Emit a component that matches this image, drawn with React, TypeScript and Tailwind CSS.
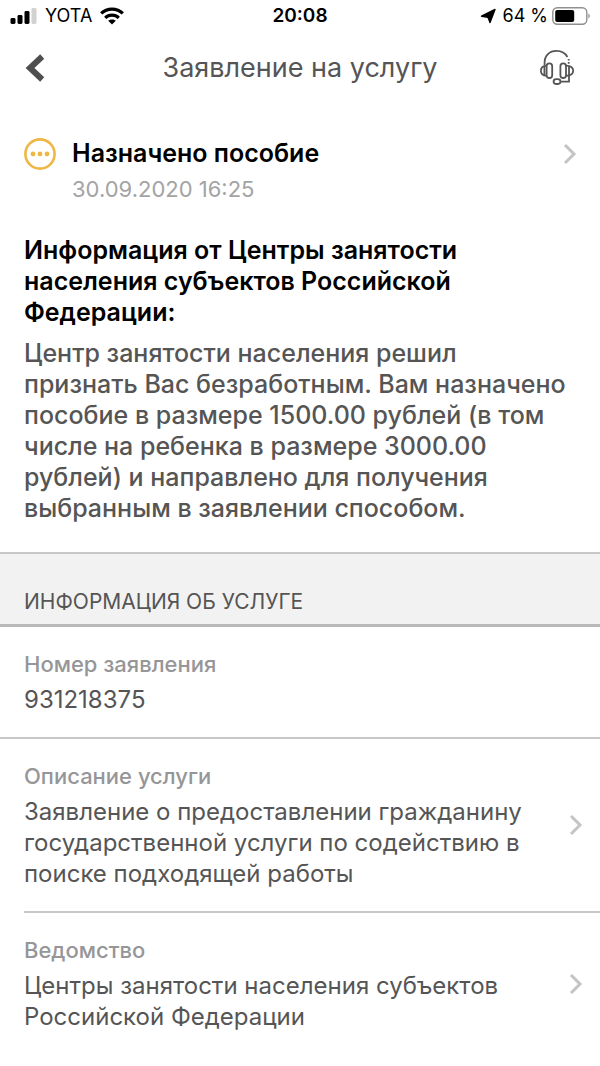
import clsx from "clsx"

type Row = {
    label: string
    value: string
    link?: boolean
    line?: "full" | "inset"
}

const rows: Row[] = [
    { label: "Номер заявления", value: "931218375", line: "full" },
    {
        label: "Описание услуги",
        value: "Заявление о предоставлении гражданину государственной услуги по содействию в поиске подходящей работы",
        link: true,
        line: "inset",
    },
    { label: "Ведомство", value: "Центры занятости населения субъектов Российской Федерации", link: true },
]

const Chevron = () => (
    <svg className="h-6 w-4 shrink-0" viewBox="0 0 16 24" fill="none" stroke="#c4c4c4" strokeWidth="3" aria-hidden="true">
        <path d="M3 3 L12 12 L3 21" />
    </svg>
)

const StatusBar = () => (
    <div className="grid h-8 grid-cols-[1fr_auto_1fr] items-center px-2.5 text-lg text-black">
        <div className="flex items-center gap-2">
            <svg className="h-4 w-[27px]" viewBox="0 0 27 16" aria-hidden="true">
                <rect x="0.5" y="10" width="5" height="6" rx="1.4" />
                <rect x="7.5" y="7" width="5" height="9" rx="1.4" />
                <rect x="14.5" y="3" width="5" height="13" rx="1.4" />
                <rect x="21.5" y="0" width="5" height="16" rx="1.4" fill="#d2d2d2" />
            </svg>
            <span>YOTA</span>
            <svg className="h-[18px] w-6" viewBox="0 0 24 18" fill="none" stroke="black" strokeWidth="3.2" aria-hidden="true">
                <path d="M1.2 6.4 C7 0.6 17 0.6 22.8 6.4" />
                <path d="M5.2 10.8 C9 7.2 15 7.2 18.8 10.8" />
                <path d="M12 17.5 L8.2 13.8 C10.4 12 13.6 12 15.8 13.8 Z" fill="black" stroke="none" />
            </svg>
        </div>
        <span className="text-[19px] font-semibold">20:08</span>
        <div className="flex items-center justify-end gap-1">
            <svg className="mr-0.5 h-4 w-4" viewBox="0 0 16 16" aria-hidden="true">
                <path d="M15 1.5 L10 14.5 L8 9.2 L1.5 8.2 Z" stroke="black" strokeWidth="1.4" strokeLinejoin="round" />
            </svg>
            <span>64 %</span>
            <svg className="h-[18px] w-[38px]" viewBox="0 0 38 18" aria-hidden="true">
                <rect x="0.8" y="0.8" width="34" height="16.4" rx="4.5" fill="none" stroke="#8f8f8f" strokeWidth="1.4" />
                <rect x="3.2" y="3" width="19" height="12" rx="2" />
                <path d="M36.4 6.5 C38.2 7.5 38.2 10.5 36.4 11.5 Z" fill="#8f8f8f" />
            </svg>
        </div>
    </div>
)

const Header = () => (
    <header className="grid h-[72px] grid-cols-[1fr_auto_1fr] items-center px-6 text-[#555555]">
        <button type="button" aria-label="Назад" className="justify-self-start">
            <svg className="h-7 w-5" viewBox="0 0 20 28" fill="none" stroke="#4f4f4f" strokeWidth="6" aria-hidden="true">
                <path d="M18.2 2.5 L6 14 L18.2 25.5" />
            </svg>
        </button>
        <h1 className="text-[27px] leading-8">Заявление на услугу</h1>
        <button type="button" aria-label="Поддержка" className="justify-self-end">
            <svg className="h-9 w-9" viewBox="0 0 36 36" fill="none" stroke="#555555" strokeWidth="1.8" aria-hidden="true">
                <path d="M4.6 15 V12.5 C4.6 5.4 9.6 0.9 16.4 0.9 C21.4 0.9 25.4 3.2 27.4 7" />
                <path d="M28.7 9 V10.6 M28.7 12 V13.8" />
                <rect x="6.6" y="13.4" width="5.6" height="14.6" rx="2.8" />
                <rect x="20.4" y="13.4" width="5.6" height="14.6" rx="2.8" />
                <path d="M6.6 15.6 C2.4 15.8 0.9 18 0.9 20.7 C0.9 23.4 2.4 25.6 6.6 25.8" />
                <path d="M4.4 16 V25.4" />
                <path d="M26 15.6 C31 15.8 33.2 18 33.2 20.7 C33.2 23.4 31 25.6 26 25.8" />
                <path d="M29 16 V31.6 H20.4" />
                <rect x="13.6" y="29.2" width="6.8" height="4.8" rx="2.4" />
            </svg>
        </button>
    </header>
)

const InfoRow = ({ label, value, link, line }: Row) => {
    const content = (
        <>
            <span className="flex-1 pt-[25px] pb-[22px]">
                <span className="block text-[22px] leading-6 font-medium text-[#969699]">{label}</span>
                <span className="mt-2 block max-w-[520px] text-2xl leading-[31px] text-[#555555]">{value}</span>
            </span>
            {link && <Chevron />}
        </>
    )
    const style = clsx(
        "flex w-full items-center pr-4 text-left",
        line === "full" && "border-b-2 border-[#c8c8c8] pl-6",
        line === "inset" && "border-b-2 border-[#c8c8c8]"
    )

    return (
        <li className={line === "full" ? "" : "pl-6"}>
            {link ? (
                <button type="button" className={style}>{content}</button>
            ) : (
                <div className={style}>{content}</div>
            )}
        </li>
    )
}

const App = () => {
    return (
        <div className="min-h-screen bg-white font-[Inter,'Liberation_Sans',sans-serif]">
            <StatusBar />
            <Header />

            <main>
                <section className="pt-[34px] pb-7">
                    <button type="button" className="flex w-full items-start gap-4 pr-[22px] pl-6 text-left">
                        <svg className="h-8 w-8 shrink-0" viewBox="0 0 32 32" fill="#eeb744" aria-hidden="true">
                            <circle cx="16" cy="16" r="14.6" fill="none" stroke="#eeb744" strokeWidth="2.6" />
                            <circle cx="9" cy="16" r="2.4" />
                            <circle cx="16" cy="16" r="2.4" />
                            <circle cx="23" cy="16" r="2.4" />
                        </svg>
                        <span className="flex-1">
                            <span className="block text-[25px] leading-[31px] font-semibold text-black">Назначено пособие</span>
                            <span className="mt-1.5 block text-[22px] leading-7 text-[#a3a3a3]">30.09.2020 16:25</span>
                        </span>
                        <span className="flex h-8 items-center">
                            <Chevron />
                        </span>
                    </button>

                    <div className="px-6 text-[25px] leading-[31px]">
                        <h2 className="mt-8 max-w-[480px] font-semibold text-black">
                            Информация от Центры занятости населения субъектов Российской Федерации:
                        </h2>
                        <p className="mt-2.5 max-w-[548px] font-medium text-[#555555]">
                            Центр занятости населения решил признать Вас безработным. Вам назначено пособие в размере 1500.00 рублей (в том числе на ребенка в размере 3000.00 рублей) и направлено для получения выбранным в заявлении способом.
                        </p>
                    </div>
                </section>

                <h2 className="border-t-2 border-b-3 border-t-[#c8c8c8] border-b-[#b9b9b9] bg-[#f2f2f2] px-6 pt-9 pb-2.5 text-[21px] leading-6 text-[#555555]">
                    ИНФОРМАЦИЯ ОБ УСЛУГЕ
                </h2>

                <ul>
                    {rows.map((row) => (
                        <InfoRow key={row.label} {...row} />
                    ))}
                </ul>
            </main>
        </div>
    )
}

export default App
